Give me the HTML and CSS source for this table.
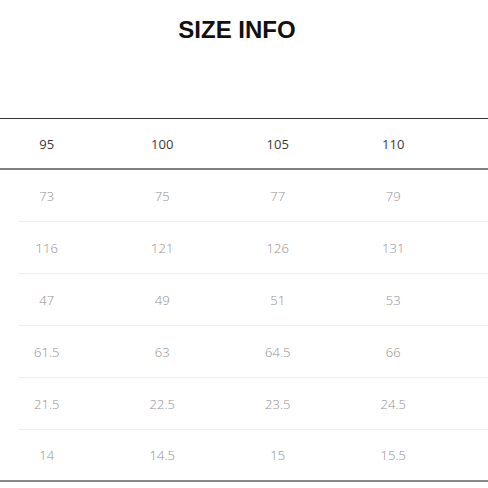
FILE: index.html
```html
<!DOCTYPE html>
<html lang="en">
<head>
<meta charset="utf-8">
<title>Size Info</title>
<link rel="stylesheet" href="styles.css">
</head>
<body>
<div class="page">
  <h1 class="title">SIZE INFO</h1>
  <div class="table">
    <div class="head">
      <div class="cells">
        <span>95</span><span>100</span><span>105</span><span>110</span>
      </div>
    </div>
    <div class="body">
      <div class="row"><div class="cells"><span>73</span><span>75</span><span>77</span><span>79</span></div></div>
      <div class="row"><div class="cells"><span>116</span><span>121</span><span>126</span><span>131</span></div></div>
      <div class="row"><div class="cells"><span>47</span><span>49</span><span>51</span><span>53</span></div></div>
      <div class="row"><div class="cells"><span>61.5</span><span>63</span><span>64.5</span><span>66</span></div></div>
      <div class="row"><div class="cells"><span>21.5</span><span>22.5</span><span>23.5</span><span>24.5</span></div></div>
      <div class="row last"><div class="cells"><span>14</span><span>14.5</span><span>15</span><span>15.5</span></div></div>
    </div>
  </div>
</div>
</body>
</html>
```
FILE: styles.css
```css
html, body {
  margin: 0;
  padding: 0;
  background: #ffffff;
}
.page {
  width: 488px;
  height: 488px;
  overflow: hidden;
}
.title {
  margin: 0;
  padding: 16px 14px 0 0;
  height: 102px;
  text-align: center;
  font-family: "Liberation Sans", Arial, sans-serif;
  font-weight: bold;
  font-size: 24px;
  line-height: 28px;
  color: #111;
}
.table {
  font-family: "Open Sans", sans-serif;
  font-size: 13px;
}
.head {
  border-top: 1px solid #333;
  border-bottom: 2px solid #808080;
  height: 49px;
  display: flex;
  align-items: center;
  color: #3a3a3a;
}
.cells {
  display: grid;
  grid-template-columns: repeat(4, 115.5px);
  margin-left: -11px;
}
.cells span {
  text-align: center;
}
.row {
  margin-left: 18px;
  height: 51px;
  border-bottom: 1px solid #efefef;
  display: flex;
  align-items: center;
  color: #8f8f8f;
  font-weight: 300;
}
.row .cells {
  margin-left: -29px;
}
.row.last {
  margin-left: 0;
  border-bottom: 2px solid #888;
  height: 50px;
}
.row.last .cells {
  margin-left: -11px;
}
```
